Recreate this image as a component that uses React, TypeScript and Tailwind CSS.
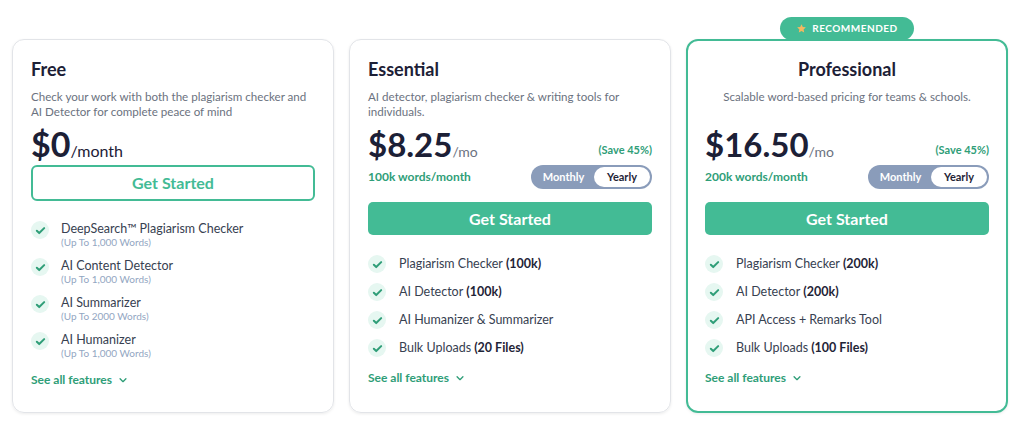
import React from 'react';

const green = 'text-[#2f9e78]';

const Check = () => (
  <span className="flex h-[18px] w-[18px] shrink-0 items-center justify-center rounded-full bg-[#e6f7f1]">
    <svg width="11" height="11" viewBox="0 0 12 12" fill="none">
      <path d="M2 6.3l2.6 2.5L10 3.4" stroke="#2f9e78" strokeWidth="2.2" strokeLinecap="round" strokeLinejoin="round" />
    </svg>
  </span>
);

const Chevron = () => (
  <svg width="10" height="10" viewBox="0 0 12 12" fill="none" className="ml-[6px]">
    <path d="M2.5 4.5L6 8l3.5-3.5" stroke="#2f9e78" strokeWidth="1.6" strokeLinecap="round" strokeLinejoin="round" />
  </svg>
);

const SeeAll = ({ className }: { className: string }) => (
  <div className={`flex items-center text-[12px] font-bold ${green} ${className}`}>
    See all features
    <Chevron />
  </div>
);

const Toggle = () => (
  <div className="flex h-[24px] w-[121px] items-center rounded-full bg-[#8a9cba] p-[2px] text-[11px] font-bold">
    <span className="flex-1 text-center text-white">Monthly</span>
    <span className="flex h-full w-[56px] items-center justify-center rounded-full bg-white text-[#1f2437]">Yearly</span>
  </div>
);

type Feat = { name: string; bold?: string };

const PaidBody = ({ price, words, feats }: { price: string; words: string; feats: Feat[] }) => (
  <div>
    <div className="mt-[6px] flex items-end justify-between">
      <div className="flex items-baseline">
        <span className="text-[33px] font-bold leading-[38px] text-[#1c2036]">{price}</span>
        <span className="text-[14px] text-[#6b7280]">/mo</span>
      </div>
      <span className={`mb-[5px] text-[11px] font-bold ${green}`}>(Save 45%)</span>
    </div>
    <div className="mt-[2px] flex items-center justify-between">
      <span className={`text-[12px] font-bold ${green}`}>{words}</span>
      <Toggle />
    </div>
    <button className="mt-[13px] h-[33px] w-full rounded-[5px] bg-[#43bb95] text-[16px] font-bold text-white">
      Get Started
    </button>
    <ul className="mt-[20px] flex flex-col gap-[10px]">
      {feats.map((f) => (
        <li key={f.name} className="flex items-center gap-[13px] text-[12.5px] leading-[18px] text-[#374151]">
          <Check />
          <span>
            {f.name}
            {f.bold && <span className="font-bold text-[#1f2437]"> {f.bold}</span>}
          </span>
        </li>
      ))}
    </ul>
    <SeeAll className="mt-[12px]" />
  </div>
);

export default function App() {
  const freeFeats = [
    ['DeepSearch™ Plagiarism Checker', '(Up To 1,000 Words)'],
    ['AI Content Detector', '(Up To 1,000 Words)'],
    ['AI Summarizer', '(Up To 2000 Words)'],
    ['AI Humanizer', '(Up To 1,000 Words)'],
  ];
  return (
    <div className="min-h-[435px] bg-white pl-[12px] pt-[39px] font-['Lato',sans-serif]">
      <div className="flex gap-[15px]">
        {/* Free */}
        <div className="h-[374px] w-[322px] rounded-[12px] border border-[#e2e4e8] px-[18px] pt-[18px] shadow-[0_1px_3px_rgba(0,0,0,0.08)]">
          <h3 className="text-[18px] font-bold leading-[22px] text-[#1c2036]">Free</h3>
          <p className="mt-[9px] text-[11.6px] leading-[15px] text-[#6b7280]">
            Check your work with both the plagiarism checker and AI Detector for complete peace of mind
          </p>
          <div className="mt-[6px] flex items-baseline">
            <span className="text-[34px] font-bold leading-[38px] text-[#1c2036]">$0</span>
            <span className="text-[16px] text-[#1c2036]">/month</span>
          </div>
          <button className="mt-[2px] h-[36px] w-full rounded-[6px] border-2 border-[#43bb95] text-[16px] font-bold text-[#43bb95]">
            Get Started
          </button>
          <ul className="mt-[19px] flex flex-col gap-[9px]">
            {freeFeats.map(([n, s]) => (
              <li key={n} className="flex gap-[12px]">
                <span className="mt-[1px]"><Check /></span>
                <div>
                  <div className="text-[12.5px] leading-[17px] text-[#374151]">{n}</div>
                  <div className="text-[10px] leading-[11px] text-[#93a6c2]">{s}</div>
                </div>
              </li>
            ))}
          </ul>
          <SeeAll className="mt-[12px]" />
        </div>

        {/* Essential */}
        <div className="h-[374px] w-[322px] rounded-[12px] border border-[#e2e4e8] px-[18px] pt-[18px] shadow-[0_1px_3px_rgba(0,0,0,0.08)]">
          <h3 className="text-[18px] font-bold leading-[22px] text-[#1c2036]">Essential</h3>
          <p className="mt-[9px] text-[11.6px] leading-[15px] text-[#6b7280]">
            AI detector, plagiarism checker &amp; writing tools for individuals.
          </p>
          <PaidBody
            price="$8.25"
            words="100k words/month"
            feats={[
              { name: 'Plagiarism Checker', bold: '(100k)' },
              { name: 'AI Detector', bold: '(100k)' },
              { name: 'AI Humanizer & Summarizer' },
              { name: 'Bulk Uploads', bold: '(20 Files)' },
            ]}
          />
        </div>

        {/* Professional */}
        <div className="relative h-[374px] w-[322px] rounded-[12px] border-2 border-[#43bb95] px-[17px] pt-[17px] shadow-[0_1px_3px_rgba(0,0,0,0.08)]">
          <div className="absolute -top-[24px] left-1/2 flex h-[23px] w-[134px] -translate-x-1/2 items-center justify-center gap-[5px] rounded-full bg-[#43bb95] text-[10px] font-bold tracking-[0.5px] text-white">
            <svg width="11" height="11" viewBox="0 0 24 24">
              <path d="M12 2.5l2.9 6.1 6.6.8-4.9 4.6 1.3 6.6L12 17.3l-5.9 3.3 1.3-6.6-4.9-4.6 6.6-.8z" fill="#f4b860" />
            </svg>
            RECOMMENDED
          </div>
          <h3 className="text-center text-[18px] font-bold leading-[22px] text-[#1c2036]">Professional</h3>
          <p className="mt-[9px] min-h-[30px] text-center text-[11.6px] leading-[15px] text-[#6b7280]">
            Scalable word-based pricing for teams &amp; schools.
          </p>
          <PaidBody
            price="$16.50"
            words="200k words/month"
            feats={[
              { name: 'Plagiarism Checker', bold: '(200k)' },
              { name: 'AI Detector', bold: '(200k)' },
              { name: 'API Access + Remarks Tool' },
              { name: 'Bulk Uploads', bold: '(100 Files)' },
            ]}
          />
        </div>
      </div>
    </div>
  );
}
